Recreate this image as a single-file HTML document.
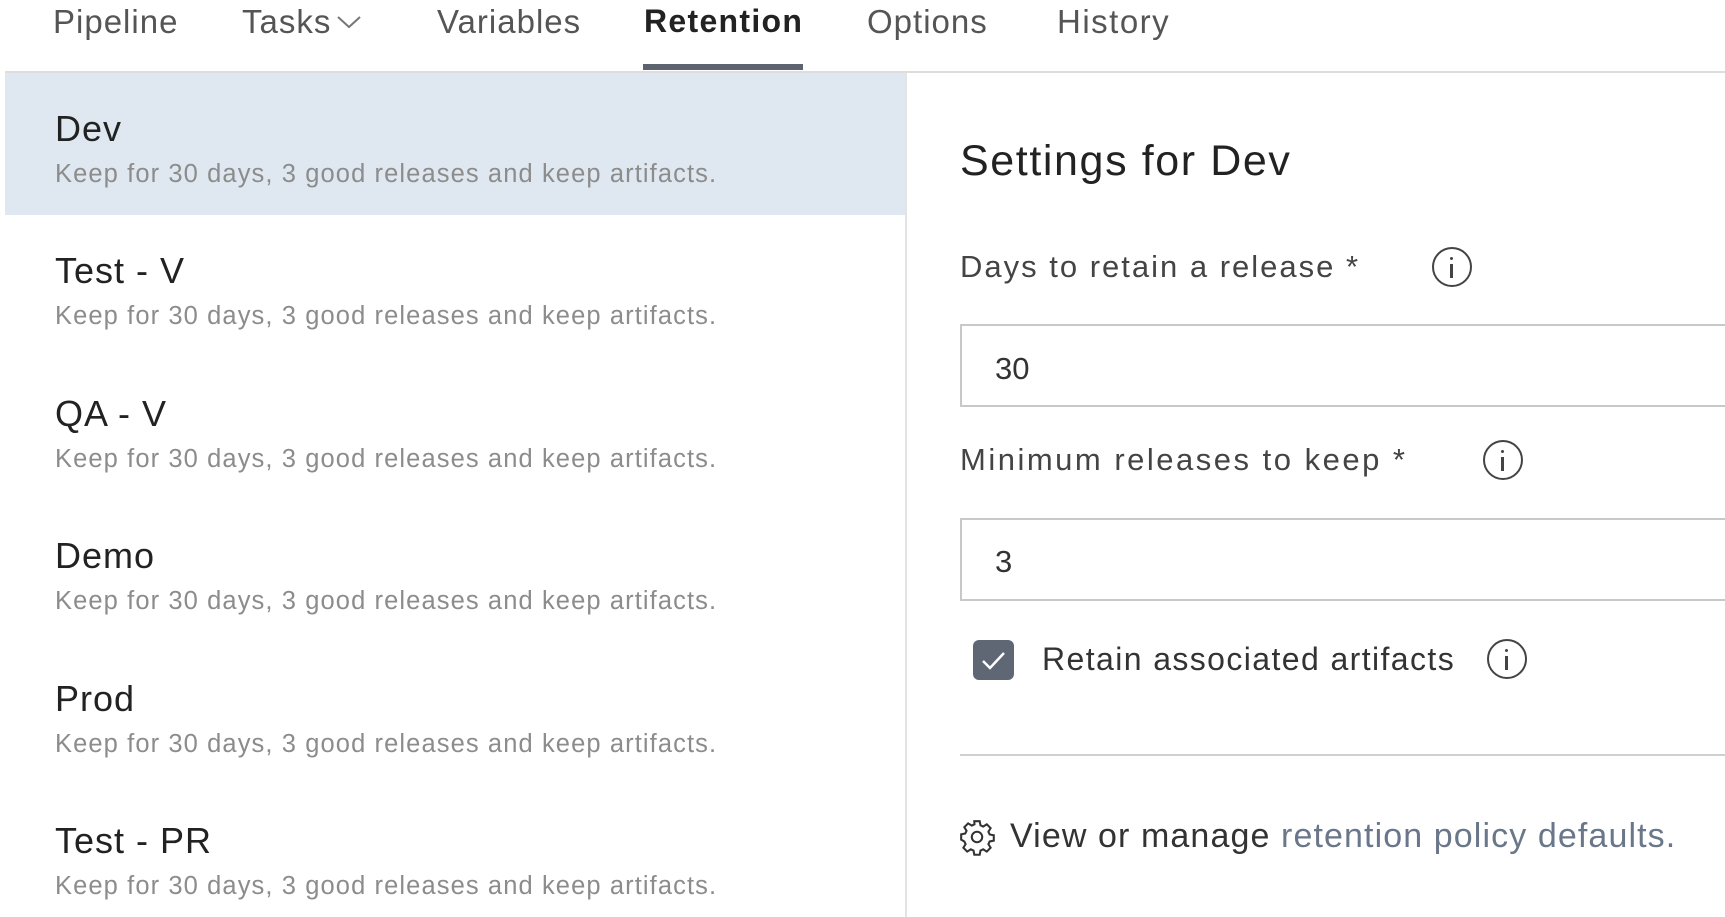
<!DOCTYPE html>
<html><head><meta charset="utf-8"><style>
*{margin:0;padding:0;box-sizing:border-box}
body{width:1725px;height:917px;background:#fff;font-family:"Liberation Sans",sans-serif;position:relative;overflow:hidden;color:#333}
.a{position:absolute;white-space:nowrap;line-height:1}
.tab{font-size:33px;color:#555;top:5px;letter-spacing:1px}
.t{font-size:36px;color:#222;left:55px;letter-spacing:1px}
.s{font-size:25.5px;color:#8c8c8c;left:55px;letter-spacing:1.1px}
.lbl{font-size:31px;color:#444;left:960px;letter-spacing:2px}
.info{position:absolute;width:40px;height:40px;border:2.5px solid #444;border-radius:50%}
.info:before{content:"";position:absolute;left:16px;top:8px;width:3px;height:3px;background:#444;border-radius:50%}
.info:after{content:"";position:absolute;left:16px;top:15px;width:3px;height:14px;background:#444}
.inp{position:absolute;left:960px;width:800px;border:2px solid #c8c8c8;border-right:none}
</style></head><body>
<div class="a tab" style="left:53px">Pipeline</div>
<div class="a tab" style="left:242px">Tasks</div>
<svg class="a" style="left:336px;top:14px" width="26" height="16"><path d="M2 3 L13 13 L24 3" fill="none" stroke="#777" stroke-width="2"/></svg>
<div class="a tab" style="left:437px">Variables</div>
<div class="a tab" style="left:644px;color:#222;font-weight:bold;font-size:32px;letter-spacing:1.3px">Retention</div>
<div class="a tab" style="left:867px">Options</div>
<div class="a tab" style="left:1057px;letter-spacing:1.5px">History</div>
<div class="a" style="left:643px;top:64px;width:160px;height:6px;background:#5d6470"></div>
<div class="a" style="left:5px;top:71px;width:1720px;height:2px;background:#ddd"></div>
<div class="a" style="left:5px;top:73px;width:900px;height:142px;background:#dfe8f0"></div>
<div class="a" style="left:905px;top:73px;width:2px;height:844px;background:#e4e4e4"></div>

<div class="a t" style="top:111px">Dev</div><div class="s a" style="top:162px">Keep for 30 days, 3 good releases and keep artifacts.</div>
<div class="a t" style="top:253px">Test - V</div><div class="s a" style="top:304px">Keep for 30 days, 3 good releases and keep artifacts.</div>
<div class="a t" style="top:396px">QA - V</div><div class="s a" style="top:447px">Keep for 30 days, 3 good releases and keep artifacts.</div>
<div class="a t" style="top:538px">Demo</div><div class="s a" style="top:589px">Keep for 30 days, 3 good releases and keep artifacts.</div>
<div class="a t" style="top:681px">Prod</div><div class="s a" style="top:732px">Keep for 30 days, 3 good releases and keep artifacts.</div>
<div class="a t" style="top:823px">Test - PR</div><div class="s a" style="top:874px">Keep for 30 days, 3 good releases and keep artifacts.</div>

<div class="a" style="left:960px;top:140px;font-size:43px;color:#222;letter-spacing:1.6px">Settings for Dev</div>
<div class="a lbl" style="top:251px">Days to retain a release *</div>
<div class="info" style="left:1432px;top:247px"></div>
<div class="inp" style="top:324px;height:83px"></div>
<div class="a" style="left:995px;top:353px;font-size:31px;color:#333">30</div>
<div class="a lbl" style="top:444px;letter-spacing:2.5px">Minimum releases to keep *</div>
<div class="info" style="left:1483px;top:440px"></div>
<div class="inp" style="top:518px;height:83px"></div>
<div class="a" style="left:995px;top:546px;font-size:31px;color:#333">3</div>
<div class="a" style="left:973px;top:640px;width:41px;height:40px;background:#5f6775;border-radius:6px"></div>
<svg class="a" style="left:973px;top:640px" width="41" height="40"><path d="M10 21 L17 28 L31 13" fill="none" stroke="#fff" stroke-width="2.5"/></svg>
<div class="a" style="left:1042px;top:643px;font-size:32px;color:#333;letter-spacing:1.4px">Retain associated artifacts</div>
<div class="info" style="left:1487px;top:639px"></div>
<div class="a" style="left:960px;top:754px;width:765px;height:2px;background:#d0d0d0"></div>
<svg class="a" style="left:958px;top:818px" width="38" height="38" viewBox="0 0 24 24"><path d="M10.3 2h3.4l.5 2.6 1.7.8 2.3-1.4 2.4 2.4-1.4 2.3.8 1.7 2.6.5v3.4l-2.6.5-.8 1.7 1.4 2.3-2.4 2.4-2.3-1.4-1.7.8-.5 2.6h-3.4l-.5-2.6-1.7-.8-2.3 1.4-2.4-2.4 1.4-2.3-.8-1.7L2 13.7v-3.4l2.6-.5.8-1.7L4 5.8l2.4-2.4 2.3 1.4 1.7-.8z" fill="none" stroke="#333" stroke-width="1.3"/><circle cx="12" cy="12" r="3.3" fill="none" stroke="#333" stroke-width="1.3"/></svg>
<div class="a" style="left:1010px;top:819px;font-size:34px;color:#333;letter-spacing:1.1px">View or manage <span style="color:#6a7689">retention policy defaults.</span></div>
</body></html>
